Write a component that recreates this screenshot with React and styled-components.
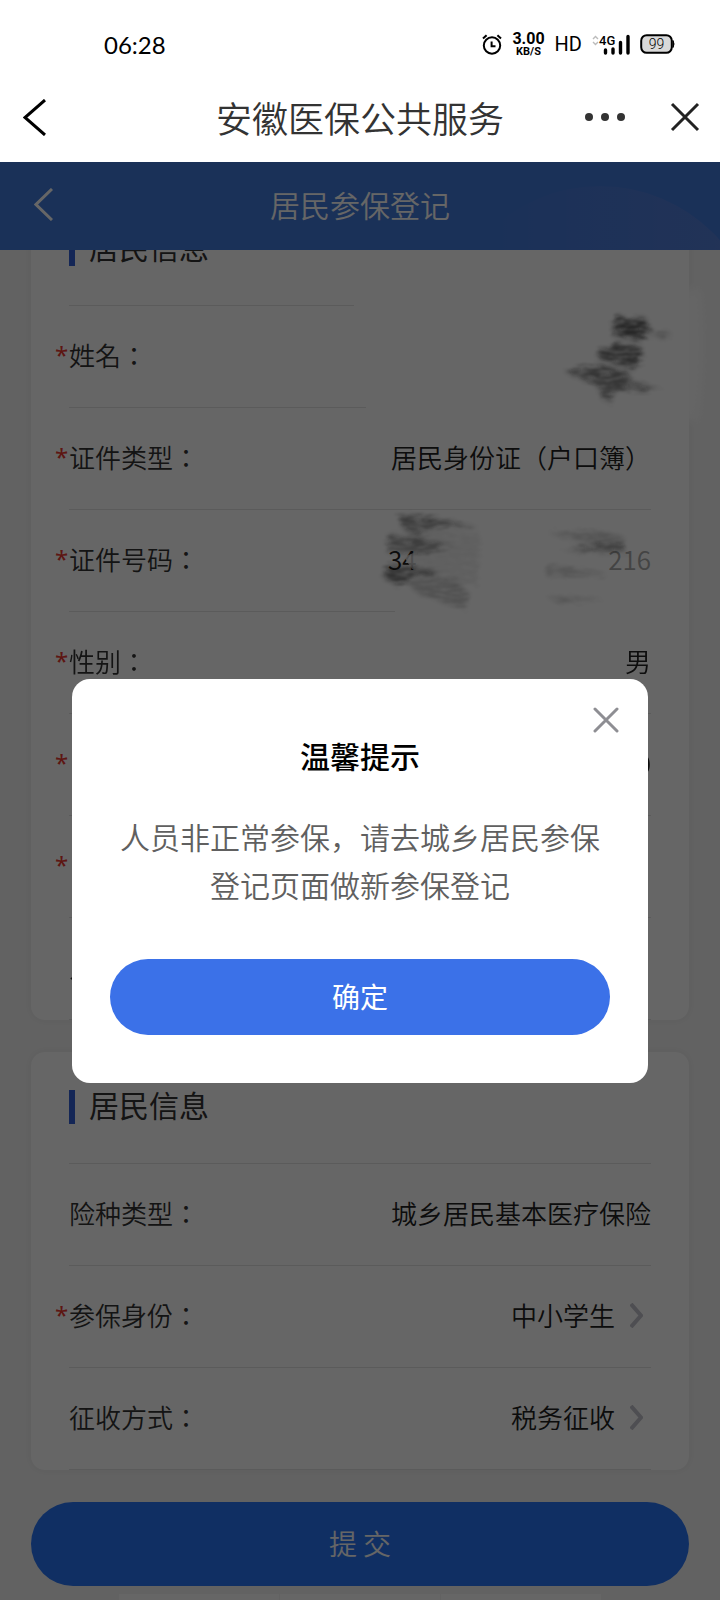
import React, { useState } from "react";
import styled, { createGlobalStyle } from "styled-components";

const GlobalStyle = createGlobalStyle`
    * {
        box-sizing: border-box;
    }
    body {
        margin: 0;
        font-family: "Noto Sans CJK SC", sans-serif;
        color: #333;
        background: #fff;
    }
    button, select, output {
        font: inherit;
        color: inherit;
        border: 0;
        padding: 0;
        background: none;
    }
    button {
        cursor: pointer;
    }
    svg {
        display: block;
    }
`
const Screen = styled.div`
    height: 100vh;
    display: flex;
    flex-direction: column;
`
const StatusBar = styled.div`
    height: 72px;
    padding: 16px 45px 0 104px;
    display: flex;
    align-items: center;
    justify-content: space-between;
    color: #000;
`
const Clock = styled.time`
    font-family: "Lato", sans-serif;
    font-size: 24px;
`
const StatusIcons = styled.div`
    display: flex;
    align-items: center;
    gap: 10px;
`
const NetSpeed = styled.div`
    display: flex;
    flex-direction: column;
    align-items: center;
    font-family: "Roboto", sans-serif;
    font-weight: 700;
    font-size: 16px;
    line-height: 14px;

    small {
        font-size: 11px;
        line-height: 11px;
    }
`
const Hd = styled.span`
    font-family: "Roboto", sans-serif;
    font-size: 20px;
    line-height: 24px;
`
const AppBar = styled.header`
    height: 90px;
    padding: 0 20px 0 23px;
    display: grid;
    grid-template-columns: 130px 1fr 133px;
    align-items: center;
`
const AppTitle = styled.h1`
    margin: 0;
    font-size: 36px;
    line-height: 48px;
    font-weight: 350;
    text-align: center;
    white-space: nowrap;
`
const AppActions = styled.div`
    display: flex;
    align-items: center;
    justify-content: flex-end;
    gap: 45px;
`
const WebView = styled.main`
    position: relative;
    flex: 1;
    min-height: 0;
    display: flex;
    flex-direction: column;
    background: #f5f5f5;
`
const PageHeader = styled.div`
    position: relative;
    flex: none;
    height: 88px;
    padding: 0 34px 4px;
    display: grid;
    grid-template-columns: 60px 1fr 60px;
    align-items: center;
    overflow: hidden;
    color: #fff;
    background: #417adc;

    &::after {
        content: "";
        position: absolute;
        top: 24px;
        right: -40px;
        width: 320px;
        height: 320px;
        border-radius: 50%;
        background: linear-gradient(to right, rgba(255, 170, 200, 0) 10%, rgba(255, 170, 200, 0.12));
    }
`
const PageTitle = styled.h2`
    margin: 0;
    font-size: 30px;
    line-height: 40px;
    font-weight: 350;
    text-align: center;
`
/* scrolled to the end, so the first card is cut off by the header */
const ScrollArea = styled.form`
    flex: 1;
    min-height: 0;
    overflow: hidden;
    display: flex;
    flex-direction: column;
    justify-content: flex-end;
    padding: 0 31px;

    > * {
        flex: none;
    }
`
const Card = styled.section`
    margin-bottom: 32px;
    padding: 0 38px 0 24px;
    border-radius: 14px;
    background: #fff;
    box-shadow: 0 0 10px rgba(0, 0, 0, 0.06);
`
const line = props => props.$fade
    ? `linear-gradient(to right, #e4e4e4 ${props.$fade}, transparent ${props.$fade})`
    : 'linear-gradient(#e4e4e4, #e4e4e4)'

const CardTitle = styled.h3`
    height: 112px;
    margin: 0 0 0 14px;
    padding-bottom: 2px;
    display: flex;
    align-items: center;
    gap: 14px;
    font-size: 30px;
    line-height: 34px;
    font-weight: 400;
    background: ${line} bottom / 100% 1px no-repeat;

    &::before {
        content: "";
        width: 6px;
        height: 34px;
        background: #3460d6;
    }
    span {
        padding-bottom: 6px;
    }
`
const Row = styled.div`
    height: 102px;
    display: grid;
    grid-template-columns: 14px 1fr;
    align-items: center;
    font-size: 26px;
    line-height: 36px;
    font-weight: 350;
`
const Star = styled.span`
    padding-bottom: 4px;
    font-family: "Noto Sans", sans-serif;
    font-size: 24px;
    font-weight: 400;
    color: #e8382f;
`
const RowBody = styled.div`
    position: relative;
    grid-column: 2;
    height: 100%;
    padding-bottom: 4px;
    display: flex;
    align-items: center;
    justify-content: space-between;
    background: ${line} bottom / 100% 1px no-repeat;

    label {
        font-family: "Noto Sans CJK TC", "Noto Sans CJK SC", sans-serif;
    }
`
const Value = styled.output`
    color: #222;
`
const MaskedNumber = styled.output`
    width: 263px;
    display: flex;
    justify-content: space-between;
    color: #222;

    span:last-child {
        color: #aaa;
    }
`
const Picker = styled.div`
    display: flex;
    align-items: center;
    gap: 15px;
    padding-right: 8px;
    color: #222;

    select {
        appearance: none;
        text-align-last: right;
    }
`
const SmudgeBox = styled.svg`
    position: absolute;
    top: ${props => props.$top};
    right: ${props => props.$right};
    overflow: visible;
    pointer-events: none;
`
const SubmitButton = styled.button`
    height: 84px;
    margin-bottom: 8px;
    padding-bottom: 3px;
    border-radius: 42px;
    font-size: 28px;
    font-weight: 350;
    color: #fff;
    background: #2a76f8;
`
const BottomTabs = styled.div`
    height: 6px;
    width: 482px;
    align-self: center;
    display: grid;
    grid-template-columns: repeat(3, 1fr);
    gap: 1px;

    span {
        background: #fff;
    }
`
const Overlay = styled.div`
    position: absolute;
    inset: 0;
    display: flex;
    align-items: center;
    justify-content: center;
    background: rgba(0, 0, 0, 0.6);
`
const Dialog = styled.div`
    position: relative;
    width: 80%;
    padding: 52px 38px 48px;
    border-radius: 18px;
    text-align: center;
    background: #fff;

    h4 {
        margin: 0 0 33px;
        font-size: 30px;
        line-height: 48px;
        font-weight: 500;
        color: #000;
    }
    p {
        margin: 0 0 51px;
        font-size: 30px;
        line-height: 48px;
        font-weight: 350;
        color: #606060;
    }
`
const DialogClose = styled.button`
    position: absolute;
    top: 28px;
    right: 29px;
`
const ConfirmButton = styled.button`
    display: block;
    width: 100%;
    height: 76px;
    padding-bottom: 2px;
    border-radius: 38px;
    font-size: 28px;
    font-weight: 400;
    color: #fff;
    background: #3b71e8;
`

const Chevron = ({ width, height, back, stroke = "currentColor", weight = 3 }) => (
    <svg width={width} height={height} fill="none" stroke={stroke} strokeWidth={weight} aria-hidden="true">
        <path d={back
            ? `M${width - 1} 1L2 ${height / 2}L${width - 1} ${height - 1}`
            : `M1 1L${width - 2} ${height / 2}L1 ${height - 1}`}
        />
    </svg>
)

const Cross = ({ size, stroke, weight = 3, cap = "butt" }) => (
    <svg width={size} height={size} stroke={stroke} strokeWidth={weight} strokeLinecap={cap} aria-hidden="true">
        <path d={`M2 2L${size - 2} ${size - 2}M${size - 2} 2L2 ${size - 2}`} />
    </svg>
)

const AlarmIcon = () => (
    <svg width="20" height="21" fill="none" stroke="#000" strokeWidth="2" aria-hidden="true">
        <circle cx="10" cy="11.5" r="8.2" />
        <path d="M9.6 7.5V12.2H13.5M1 4.6L4.6 1.2M19 4.6L15.4 1.2" />
    </svg>
)

const SignalIcon = () => (
    <svg width="38" height="21" aria-hidden="true">
        <path d="M1 5L3.5 2.5L6 5M1 8L3.5 10.5L6 8" fill="none" stroke="#bbb" strokeWidth="1.4" />
        <text x="7" y="11" fontFamily="Roboto, sans-serif" fontSize="13" fontWeight="500">4G</text>
        <path d="M13.5 16V19M21 15V19M28.5 8.5V19M36 2.5V19" stroke="#000" strokeWidth="3.4" strokeLinecap="round" />
    </svg>
)

const BatteryIcon = () => (
    <svg width="35" height="20" aria-hidden="true">
        <rect x="1.2" y="1.2" width="30.6" height="17.6" rx="5.5" fill="#d9d9d9" stroke="#000" strokeWidth="2" />
        <path d="M33 6.5Q35 10 33 13.5Z" stroke="#000" />
        <text x="16.5" y="15" textAnchor="middle" fontFamily="Roboto, sans-serif" fontSize="14" fontWeight="300">99</text>
    </svg>
)

const SmudgeFilter = ({ id, seed }) => (
    <filter id={id} x="-10%" y="-10%" width="120%" height="120%">
        <feGaussianBlur in="SourceGraphic" stdDeviation="2" result="soft" />
        <feTurbulence type="fractalNoise" baseFrequency="0.08 0.4" numOctaves="3" seed={seed} result="grain" />
        <feDisplacementMap in="soft" in2="grain" scale="10" result="rough" />
        <feColorMatrix in="grain" type="matrix" values="0 0 0 0 0  0 0 0 0 0  0 0 0 0 0  1.6 0 0 0 0" result="holes" />
        <feComposite in="rough" in2="holes" operator="in" />
        <feGaussianBlur stdDeviation="0.8" />
    </filter>
)

/* pencil rubbing over the name */
const NameSmudge = () => (
    <SmudgeBox $top="0" $right="-69px" width="180" height="102" viewBox="540 305 180 102" aria-hidden="true">
        <SmudgeFilter id="rub-name" seed="4" />
        <filter id="rub-edge" x="-100%" y="-20%" width="300%" height="140%">
            <feGaussianBlur stdDeviation="4" />
        </filter>
        <path d="M680 288H700Q706 350 698 420H680Z" fill="#fff" opacity="0.8" filter="url(#rub-edge)" />
        <g filter="url(#rub-name)" opacity="0.8">
            <path d="M616 316L646 318L650 330L640 340L612 334Z" fill="#111" opacity="0.85" />
            <path d="M648 330L672 332L664 339Z" fill="#111" opacity="0.3" />
            <path d="M618 343L641 346L643 356L634 368L600 358L596 350Z" fill="#111" opacity="0.75" />
            <path d="M564 370L600 364L626 370L634 382L662 388L626 389L610 392L612 402L602 398L600 386Z" fill="#111" opacity="0.65" />
        </g>
    </SmudgeBox>
)

const NumberSmudge = () => (
    <SmudgeBox $top="-9px" $right="-9px" width="290" height="112" viewBox="370 500 290 112" aria-hidden="true">
        <SmudgeFilter id="rub-number" seed="11" />
        <path d="M404 556L418 550V568H412Z" fill="#fff" opacity="0.8" />
        <g filter="url(#rub-number)" opacity="0.75">
            <path d="M400 513L430 516L478 526L440 525L412 532L400 524Z" fill="#111" opacity="0.6" />
            <path d="M388 534L412 536L452 544L424 552L388 552Z" fill="#111" opacity="0.55" />
            <path d="M388 564L412 566L440 572L412 576L398 584L382 576Z" fill="#111" opacity="0.75" />
            <path d="M404 580L456 578L470 594L464 608L420 594Z" fill="#111" opacity="0.28" />
            <path d="M404 526L480 532L478 584L404 580Z" fill="#111" opacity="0.1" />
            <path d="M546 532L600 530L624 536L624 552L560 550L600 544Z" fill="#111" opacity="0.25" />
            <path d="M570 548L600 542L624 542L624 552Z" fill="#111" opacity="0.45" />
            <path d="M546 564L606 572L600 575L546 575ZM546 595L606 598L560 602Z" fill="#111" opacity="0.25" />
        </g>
    </SmudgeBox>
)

const Field = ({ id, label, required, fade, children }) => (
    <Row>
        {required && <Star>*</Star>}
        <RowBody $fade={fade}>
            <label htmlFor={id}>{label}</label>
            {children}
        </RowBody>
    </Row>
)

const SelectField = ({ id, option, ...rest }) => (
    <Field id={id} {...rest}>
        <Picker>
            <select id={id}>
                <option>{option}</option>
            </select>
            <Chevron width={13} height={25} stroke="#c4c4cc" weight={4} />
        </Picker>
    </Field>
)

const App = () => {
    const [open, setOpen] = useState(true)
    const close = () => setOpen(false)

    return (
        <Screen>
            <GlobalStyle />
            <StatusBar>
                <Clock>06:28</Clock>
                <StatusIcons>
                    <AlarmIcon />
                    <NetSpeed>3.00<small>KB/S</small></NetSpeed>
                    <Hd>HD</Hd>
                    <SignalIcon />
                    <BatteryIcon />
                </StatusIcons>
            </StatusBar>
            <AppBar>
                <button type="button" aria-label="返回">
                    <Chevron back width={23} height={37} stroke="#000" />
                </button>
                <AppTitle>安徽医保公共服务</AppTitle>
                <AppActions>
                    <button type="button" aria-label="更多">
                        <svg width="40" height="8" fill="#333">
                            <circle cx="4" cy="4" r="4" />
                            <circle cx="20" cy="4" r="4" />
                            <circle cx="36" cy="4" r="4" />
                        </svg>
                    </button>
                    <button type="button" aria-label="关闭">
                        <Cross size={30} stroke="#222" />
                    </button>
                </AppActions>
            </AppBar>

            <WebView>
                <PageHeader>
                    <button type="button" aria-label="返回">
                        <Chevron back width={19} height={33} />
                    </button>
                    <PageTitle>居民参保登记</PageTitle>
                </PageHeader>

                <ScrollArea onSubmit={(e) => e.preventDefault()}>
                    <Card>
                        <CardTitle $fade="49%"><span>居民信息</span></CardTitle>
                        <Field id="name" label="姓名：" required fade="51%">
                            <Value id="name" />
                            <NameSmudge />
                        </Field>
                        <Field id="cardType" label="证件类型：" required>
                            <Value id="cardType">居民身份证（户口簿）</Value>
                        </Field>
                        <Field id="cardNo" label="证件号码：" required fade="56%">
                            <MaskedNumber id="cardNo">
                                <span>34</span>
                                <span>216</span>
                            </MaskedNumber>
                            <NumberSmudge />
                        </Field>
                        <Field id="gender" label="性别：" required>
                            <Value id="gender">男</Value>
                        </Field>
                        <Field id="birth" required>
                            <Value id="birth">0</Value>
                        </Field>
                        <Field id="nation" required />
                        <Field id="person" label="人" />
                    </Card>
                    <Card>
                        <CardTitle><span>居民信息</span></CardTitle>
                        <Field id="insurance" label="险种类型：">
                            <Value id="insurance">城乡居民基本医疗保险</Value>
                        </Field>
                        <SelectField id="identity" label="参保身份：" required option="中小学生" />
                        <SelectField id="levy" label="征收方式：" option="税务征收" />
                    </Card>
                    <SubmitButton type="submit">提 交</SubmitButton>
                    <BottomTabs>
                        <span />
                        <span />
                        <span />
                    </BottomTabs>
                </ScrollArea>

                {open && (
                    <Overlay>
                        <Dialog role="dialog" aria-labelledby="tipTitle">
                            <DialogClose type="button" aria-label="关闭" onClick={close}>
                                <Cross size={26} stroke="#8e8e93" cap="round" />
                            </DialogClose>
                            <h4 id="tipTitle">温馨提示</h4>
                            <p>人员非正常参保，请去城乡居民参保登记页面做新参保登记</p>
                            <ConfirmButton type="button" onClick={close}>确定</ConfirmButton>
                        </Dialog>
                    </Overlay>
                )}
            </WebView>
        </Screen>
    )
}

export default App;
